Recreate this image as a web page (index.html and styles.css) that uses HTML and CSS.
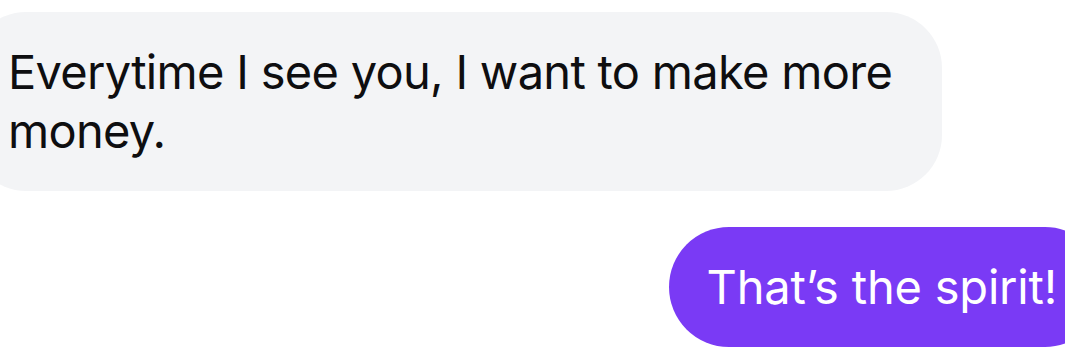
FILE: index.html
```html
<!DOCTYPE html>
<html lang="en">
<head>
<meta charset="utf-8">
<title>Chat</title>
<link rel="stylesheet" href="styles.css">
</head>
<body>
<main class="thread">
  <div class="bubble bubble-in">Everytime I see you, I want to make more money.</div>
  <div class="bubble bubble-out">That’s the spirit!</div>
</main>
</body>
</html>
```
FILE: styles.css
```css
html, body {
  margin: 0;
  padding: 0;
  overflow: hidden;
  background: #ffffff;
}
.thread {
  display: flex;
  flex-direction: column;
  gap: 36px;
  padding-top: 12px;
  font-family: Inter, "Noto Sans", sans-serif;
  font-size: 47px;
  line-height: 59px;
  letter-spacing: -0.7px;
}
.bubble {
  box-sizing: border-box;
  padding: 30px 0 31px;
}
.bubble-in {
  align-self: flex-start;
  margin-left: -30px;
  width: 972px;
  padding-left: 38px;
  padding-right: 40px;
  background: #f3f4f6;
  color: #0e0e10;
  border-radius: 56px;
}
.bubble-out {
  align-self: flex-end;
  margin-right: -40px;
  padding-left: 38px;
  padding-right: 48px;
  background: #7a3af5;
  color: #ffffff;
  border-radius: 60px;
  white-space: nowrap;
  letter-spacing: -0.2px;
}
```
